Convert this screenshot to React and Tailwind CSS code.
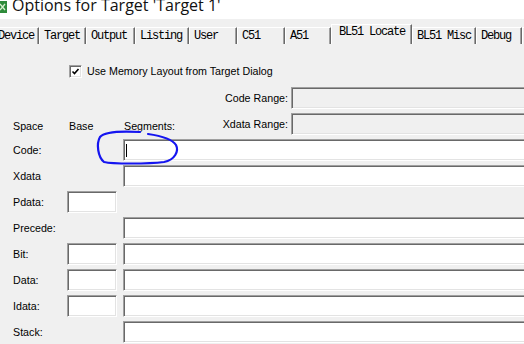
import React from 'react';

const tabs = [
  { label: 'Device', w: 46 },
  { label: 'Target', w: 47 },
  { label: 'Output', w: 49 },
  { label: 'Listing', w: 54 },
  { label: 'User', w: 48 },
  { label: 'C51', w: 48 },
  { label: 'A51', w: 46 },
  { label: 'BL51 Locate', w: 81, active: true },
  { label: 'BL51 Misc', w: 64 },
  { label: 'Debug', w: 46 },
  { label: '', w: 20 },
];

const rows = [
  { label: 'Code:', base: false, cursor: true },
  { label: 'Xdata', base: false },
  { label: 'Pdata:', base: true, noSeg: true },
  { label: 'Precede:', base: false },
  { label: 'Bit:', base: true },
  { label: 'Data:', base: true },
  { label: 'Idata:', base: true },
  { label: 'Stack:', base: false },
];

// classic windows sunken edit box
function Edit({ className = '', disabled, children }) {
  return (
    <div
      className={
        'h-[22px] flex-none border border-t-[#a0a0a0] border-l-[#a0a0a0] border-r-white border-b-white shadow-[inset_1px_1px_0_#696969,inset_-1px_-1px_0_#e3e3e3] ' +
        (disabled ? 'bg-[#f0f0f0] ' : 'bg-white ') +
        className
      }
    >
      {children}
    </div>
  );
}

function Tab({ label, w, active }) {
  return (
    <div
      style={{ width: w }}
      className={
        'flex-none border-t border-l border-t-white border-l-white border-r border-r-[#696969] shadow-[inset_-1px_0_0_#a0a0a0] bg-[#f0f0f0] whitespace-nowrap ' +
        (active ? 'h-[20px] pl-[7px]' : 'h-[17px] pl-[4px] pt-[1px]')
      }
    >
      <span className="block font-['Liberation_Mono',monospace] text-[12px] leading-[15px] tracking-[-1.2px] text-black">
        {label}
      </span>
    </div>
  );
}

export default function App() {
  return (
    <div className="relative w-[524px] h-[344px] overflow-hidden bg-[#f0f0f0] font-['Liberation_Sans',Arial,sans-serif] text-[10.7px] text-black">
      {/* title bar */}
      <div className="h-[19px] bg-white flex overflow-hidden">
        <svg width="8" height="12" viewBox="0 0 8 12" className="flex-none mt-[1px] -ml-[1px]">
          <rect x="0" y="0" width="8" height="12" fill="#2e8b3a" />
          <path d="M1 3 L6 9 M6 3 L1 9" stroke="#d8f0d0" strokeWidth="1.3" />
        </svg>
        <span className="ml-[5px] -mt-[5px] font-['Open_Sans',sans-serif] text-[16px] leading-[20px] whitespace-nowrap text-[#111]">
          Options for Target 'Target 1'
        </span>
      </div>

      {/* tab strip */}
      <div className="h-[25px] flex items-end -ml-[7px]">
        {tabs.map((t, i) => (
          <Tab key={i} {...t} />
        ))}
      </div>

      {/* page body */}
      <div className="flex flex-col">
        <div className="flex items-center h-[13px] mt-[21px] ml-[69px]">
          <div className="w-[13px] h-[13px] bg-white border border-t-[#a0a0a0] border-l-[#a0a0a0] border-r-white border-b-white shadow-[inset_1px_1px_0_#696969,inset_-1px_-1px_0_#e3e3e3] flex items-center justify-center">
            <svg width="9" height="9" viewBox="0 0 9 9">
              <path d="M1.5 4.5 L3.5 6.5 L7.5 2" stroke="#000" strokeWidth="1.6" fill="none" />
            </svg>
          </div>
          <span className="ml-[5px] whitespace-nowrap">Use Memory Layout from Target Dialog</span>
        </div>

        <div className="flex flex-col gap-[4px] mt-[9px]">
          <div className="flex items-center h-[22px]">
            <div className="w-[291px] flex-none text-right pr-[3px]">Code Range:</div>
            <Edit disabled className="w-[260px]" />
          </div>

          <div className="flex items-center h-[22px]">
            <div className="w-[291px] flex-none flex items-center">
              <div className="flex items-center mt-[4px]">
                <span className="w-[56px] pl-[13px] box-content">Space</span>
                <span className="w-[55px]">Base</span>
                <span>Segments:</span>
              </div>
              <span className="flex-1 text-right pr-[3px] whitespace-nowrap">Xdata Range:</span>
            </div>
            <Edit disabled className="w-[260px]" />
          </div>

          {rows.map((r) => (
            <div key={r.label} className="flex items-center h-[22px]">
              <div className="w-[67px] flex-none pl-[13px]">{r.label}</div>
              {r.base ? <Edit className="w-[50px]" /> : <div className="w-[50px] flex-none" />}
              {!r.noSeg && (
                <Edit className="w-[410px] ml-[6px] flex items-center">
                  {r.cursor && <div className="ml-[2px] w-[1px] h-[13px] bg-black" />}
                </Edit>
              )}
            </div>
          ))}
        </div>
      </div>

      {/* pen annotation */}
      <svg className="absolute left-0 top-0 pointer-events-none" width="524" height="344" viewBox="0 0 524 344">
        <path
          d="M140 132 C122 131 105 131 100 137 C96 144 98 157 104 162 C112 164 148 164 164 162 C175 160 179 151 176 145 C172 139 162 136 148 134"
          stroke="#1515f0"
          strokeWidth="2.2"
          fill="none"
          strokeLinecap="round"
        />
      </svg>
    </div>
  );
}
